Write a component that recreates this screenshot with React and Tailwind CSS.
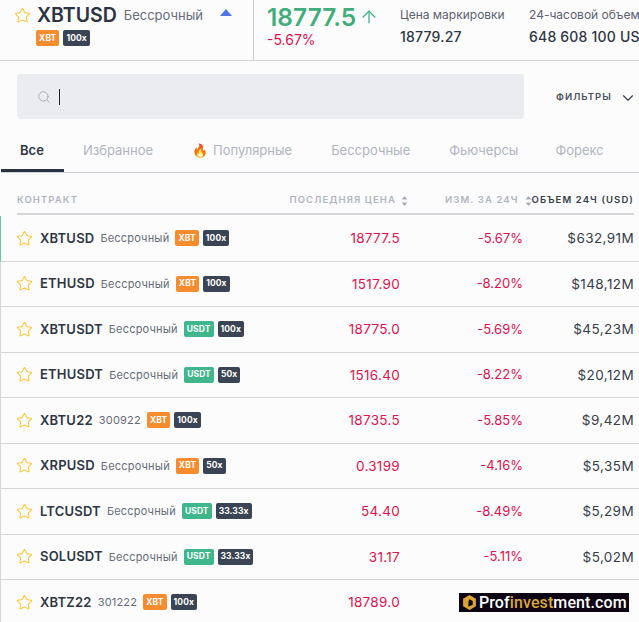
import { ChevronDown, ArrowUp, Search, Star } from 'lucide-react';

const rows = [
  { name: 'XBTUSD', type: 'Бессрочный', coin: 'XBT', lev: '100x', price: '18777.5', change: '-5.67%', volume: '$632,91M' },
  { name: 'ETHUSD', type: 'Бессрочный', coin: 'XBT', lev: '100x', price: '1517.90', change: '-8.20%', volume: '$148,12M' },
  { name: 'XBTUSDT', type: 'Бессрочный', coin: 'USDT', lev: '100x', price: '18775.0', change: '-5.69%', volume: '$45,23M' },
  { name: 'ETHUSDT', type: 'Бессрочный', coin: 'USDT', lev: '50x', price: '1516.40', change: '-8.22%', volume: '$20,12M' },
  { name: 'XBTU22', type: '300922', coin: 'XBT', lev: '100x', price: '18735.5', change: '-5.85%', volume: '$9,42M' },
  { name: 'XRPUSD', type: 'Бессрочный', coin: 'XBT', lev: '50x', price: '0.3199', change: '-4.16%', volume: '$5,35M' },
  { name: 'LTCUSDT', type: 'Бессрочный', coin: 'USDT', lev: '33.33x', price: '54.40', change: '-8.49%', volume: '$5,29M' },
  { name: 'SOLUSDT', type: 'Бессрочный', coin: 'USDT', lev: '33.33x', price: '31.17', change: '-5.11%', volume: '$5,02M' },
  { name: 'XBTZ22', type: '301222', coin: 'XBT', lev: '100x', price: '18789.0', change: '', volume: '' },
];

const tabs = [
  { label: 'Избранное', gap: 'ml-[19px]' },
  { label: 'Популярные', gap: 'ml-[39px]' },
  { label: 'Бессрочные', gap: 'ml-[39px]' },
  { label: 'Фьючерсы', gap: 'ml-[39px]' },
  { label: 'Форекс', gap: 'ml-[37px]' },
];

function Badge({ children, color }) {
  return (
    <span className={`flex h-4 items-center rounded-[2px] px-[3px] text-[8.5px] font-bold tracking-[0.1px] text-white ${color}`}>
      {children}
    </span>
  );
}

function CoinBadge({ coin }) {
  return <Badge color={coin === 'USDT' ? 'bg-[#3fb68b]' : 'bg-[#f78c2e]'}>{coin}</Badge>;
}

function SortIcon() {
  return (
    <svg width="7" height="12" viewBox="0 0 7 12" className="shrink-0 fill-[#a9adb9]">
      <path d="M3.5 1 6.5 4.5H.5z" />
      <path d="M3.5 11 .5 7.5h6z" />
    </svg>
  );
}

function Row({ row, first }) {
  return (
    <div className={`flex h-[45.5px] items-center border-b border-[#d5d6da] pr-[5px] pl-[15px] ${first ? 'border-l border-l-[#6cc59d]' : 'border-l border-l-[#d5d6da]'}`}>
      <Star size={17} strokeWidth={1.5} className="shrink-0 text-[#fbc638]" />
      <span className="ml-[7px] text-[13px] font-semibold tracking-[0.2px] text-[#2f3643]">{row.name}</span>
      <span className="ml-[6px] text-[11px] tracking-[0.2px] text-[#666c78]">{row.type}</span>
      <div className="ml-[6px] flex gap-[4px]">
        <CoinBadge coin={row.coin} />
        <Badge color="bg-[#3b4454]">{row.lev}</Badge>
      </div>
      <div className="ml-auto flex items-center">
        <span className="w-[100px] text-right text-[13.5px] tracking-[0.3px] text-[#e0114d]">{row.price}</span>
        <span className="w-[123px] text-right text-[13px] text-[#e0114d]">{row.change}</span>
        <span className="w-[111px] text-right text-[13.5px] tracking-[0.4px] text-[#363c49]">{row.volume}</span>
      </div>
    </div>
  );
}

export default function App() {
  return (
    <div className="relative h-[622px] w-[639px] overflow-hidden bg-[#fcfcfc] font-['Inter',sans-serif]">
      <header className="flex h-[61px] overflow-hidden border-b border-[#d5d6da] bg-[#fcfcfc]">
        <div className="w-[254px] shrink-0 border-r border-[#c9cacd] pt-[1px] pl-[14px]">
          <div className="flex items-center">
            <Star size={17} strokeWidth={1.5} className="text-[#fbc638]" />
            <span className="ml-[6px] text-[19.5px] font-semibold text-[#2b3240]">XBTUSD</span>
            <span className="ml-[7px] mt-[1px] text-[13px] text-[#666c78]">Бессрочный</span>
            <svg width="12" height="8" viewBox="0 0 12 8" className="ml-[17px] -mt-[6px] fill-[#4f74e8]">
              <path d="M6 0 12 7H0z" />
            </svg>
          </div>
          <div className="ml-[22px] flex gap-[4px]">
            <Badge color="bg-[#f78c2e]">XBT</Badge>
            <Badge color="bg-[#3b4454]">100x</Badge>
          </div>
        </div>
        <div className="w-[146px] shrink-0 -mt-px pl-[13px]">
          <div className="flex items-center">
            <span className="text-[24.5px] font-semibold text-[#3fae7c]">18777.5</span>
            <ArrowUp size={20} strokeWidth={1.5} className="ml-[3px] text-[#35b27d]" />
          </div>
          <div className="-mt-[7px] text-[14px] text-[#e0114d]">-5.67%</div>
        </div>
        <div className="w-[129px] shrink-0 pt-[6px]">
          <div className="text-[12px] text-[#5c6270]">Цена маркировки</div>
          <div className="mt-[2px] text-[14px] font-medium tracking-[0.2px] text-[#2f3643]">18779.27</div>
        </div>
        <div className="whitespace-nowrap pt-[6px]">
          <div className="text-[12px] text-[#5c6270]">24-часовой объем</div>
          <div className="mt-[2px] text-[14px] font-medium tracking-[0.2px] text-[#2f3643]">648 608 100 USD</div>
        </div>
      </header>

      <div className="flex h-[59px] items-start pl-[17px] pt-[13px]">
        <div className="flex h-[45px] w-[507px] items-center rounded-[3px] bg-[#ebecf0] pl-[20px]">
          <Search size={14} strokeWidth={1.5} className="text-[#a5a7ab]" />
          <span className="ml-[8px] h-[16px] w-px bg-[#222]" />
        </div>
        <div className="ml-[32px] flex h-[45px] items-center pt-[2px]">
          <span className="text-[9.5px] font-semibold tracking-[1px] text-[#4a4f5a]">ФИЛЬТРЫ</span>
          <ChevronDown size={18} strokeWidth={1.5} className="ml-[7px] text-[#363c49]" />
        </div>
      </div>

      <nav className="ml-px flex h-[53px] items-start border-b border-[#cfd0d8] text-[13px]">
        <div className="flex h-[52px] w-[63px] items-center border-b-[3px] border-[#2b3240] pl-[19px] pt-[13px] font-semibold text-[#2f3643]">Все</div>
        <div className="flex h-[49px] items-center pt-[13px] text-[#b0b4c1]">
          {tabs.map((t) => (
            <span key={t.label} className={`${t.gap} flex items-center`}>
              {t.label === 'Популярные' && <span className="mr-[5px] text-[13px]">🔥</span>}
              {t.label}
            </span>
          ))}
        </div>
      </nav>

      <div className="ml-[17px] mr-[5px] flex h-[42px] items-center border-b-2 border-[#d5d6da] pt-[15px] text-[9.5px] font-semibold tracking-[1.1px] text-[#b0b4c1]">
        <span>КОНТРАКТ</span>
        <span className="ml-auto">ПОСЛЕДНЯЯ ЦЕНА</span>
        <span className="ml-[5px]"><SortIcon /></span>
        <span className="ml-[37px]">ИЗМ. ЗА 24Ч</span>
        <span className="ml-[6px]"><SortIcon /></span>
        <span className="text-[#363c49]">ОБЪЕМ 24Ч (USD)</span>
      </div>

      <div className="mt-px">
        {rows.map((row, i) => (
          <Row key={row.name} row={row} first={i === 0} />
        ))}
      </div>

      <div className="absolute top-[593px] left-[459px] flex h-[19px] w-[170px] items-center bg-[#0d0414] pl-[4px] font-['Roboto',sans-serif] text-[16px] font-medium tracking-[0.1px] text-white">
        <svg width="13" height="15" viewBox="0 0 12 14" className="mr-[3px] shrink-0">
          <path d="M6 0 12 3.5v7L6 14 0 10.5v-7z" fill="#dba436" />
          <path d="M6 4 9 5.5V9L5 11V6z" fill="#0d0414" />
        </svg>
        Prof<span className="text-[#d8a83a]">invest</span>ment.com
      </div>
    </div>
  );
}
